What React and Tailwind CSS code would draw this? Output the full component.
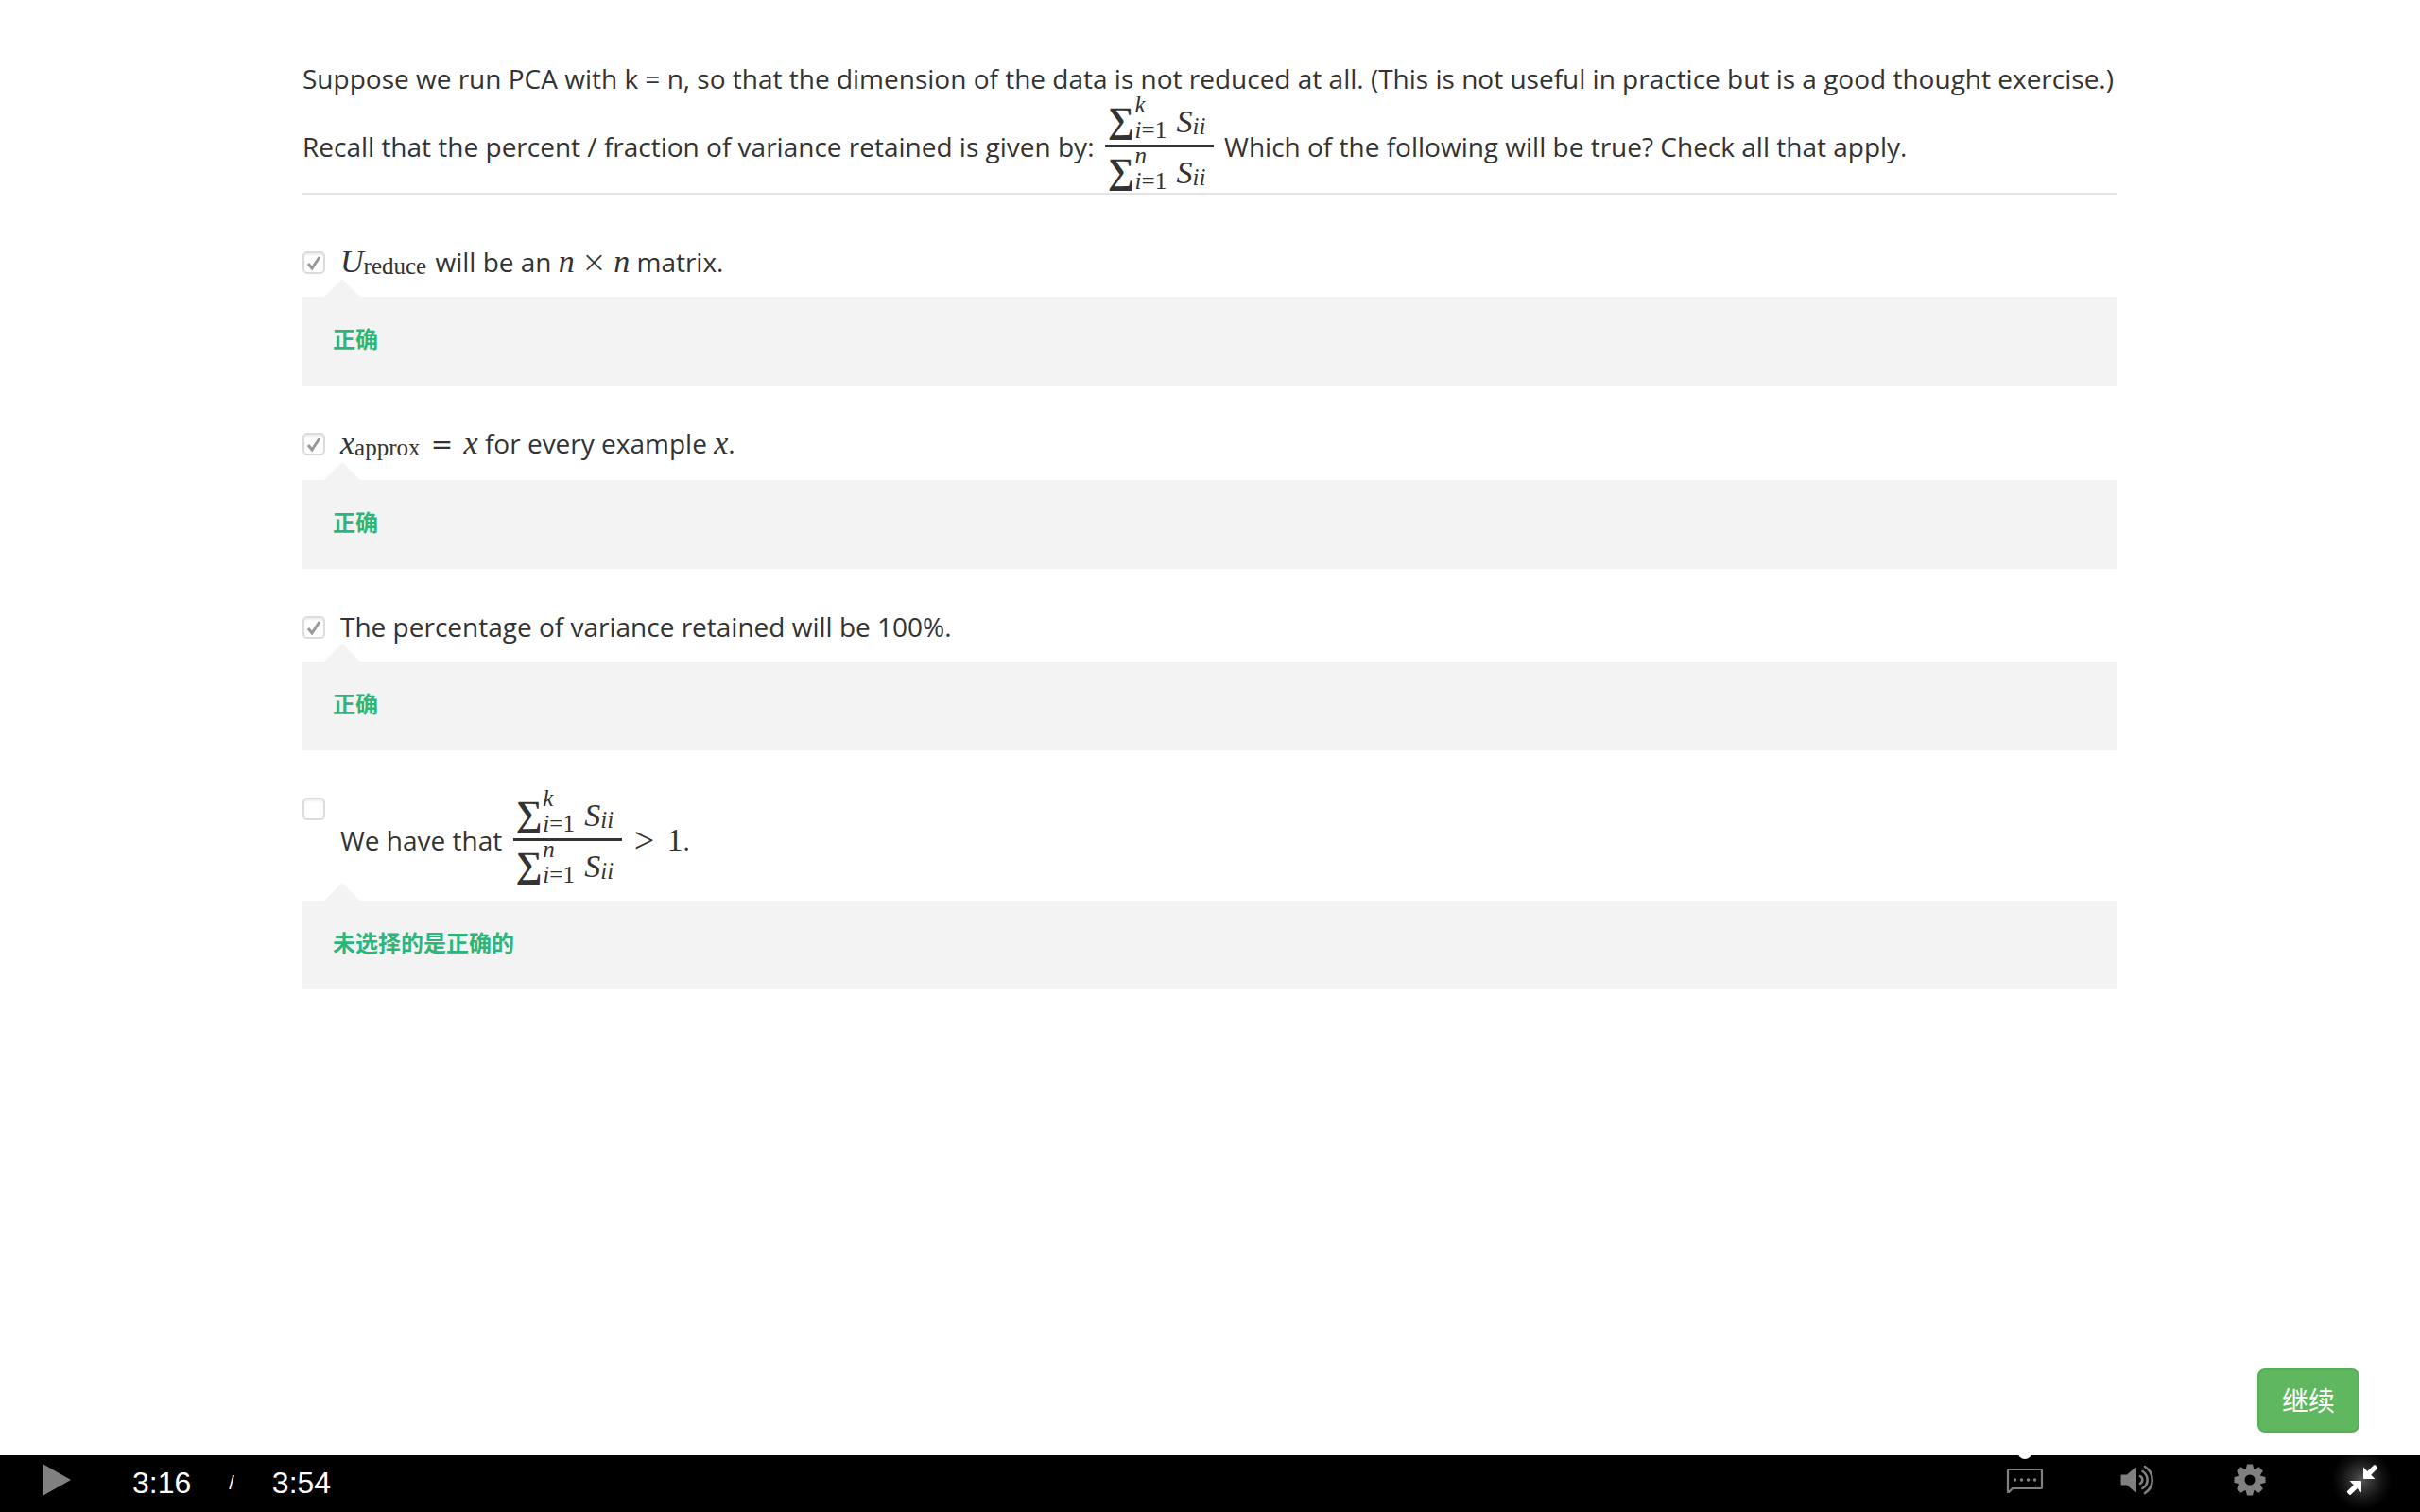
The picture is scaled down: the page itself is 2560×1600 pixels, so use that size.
function Var({ children }) {
  return <i className="font-['Liberation_Serif',serif] text-[34px] leading-none">{children}</i>
}

function Sub({ children }) {
  return (
    <sub className="static align-[-2px] font-['Liberation_Serif',serif] text-[25px] leading-none">{children}</sub>
  )
}

function Sum({ upper }) {
  return (
    <span className="flex h-[51px] items-baseline pl-[3px]">
      <span className="text-[39px] leading-[49px] font-bold">∑</span>
      <span className="-mt-[5px] ml-px flex w-9 flex-col self-start text-[25px] leading-[27px]">
        <i>{upper}</i>
        <span>
          <i>i</i>=1
        </span>
      </span>
      <span className="ml-2 leading-none">
        <Var>S</Var>
        <Sub>
          <i>ii</i>
        </Sub>
      </span>
    </span>
  )
}

function VarianceRatio() {
  return (
    <span className="mx-1 -mb-[6px] inline-flex w-[115px] flex-col align-[26px] font-['Liberation_Serif',serif]">
      <Sum upper="k" />
      <span className="h-[3px] bg-[#333]" />
      <Sum upper="n" />
    </span>
  )
}

function Option({ id, checked, feedback, children }) {
  return (
    <li>
      <div className="flex items-start gap-4 pt-[42px] pb-[18px]">
        <span className="mt-2 grid shrink-0 grid-cols-1">
          <input
            id={id}
            type="checkbox"
            defaultChecked={checked}
            className="peer col-start-1 row-start-1 size-6 appearance-none rounded-[5px] border-2 border-[#dcdcdc] bg-white shadow-[inset_0_2px_2px_#eee]"
          />
          <svg
            viewBox="0 0 24 24"
            className="pointer-events-none invisible col-start-1 row-start-1 size-6 peer-checked:visible"
            fill="none"
            stroke="#999"
            strokeWidth="3"
            aria-hidden="true"
          >
            <path d="M6 13l4 5L18 6" />
          </svg>
        </span>
        <label htmlFor={id} className="min-w-0">
          {children}
        </label>
      </div>
      <div className="relative bg-[#f3f3f3] px-8 py-[35px] text-2xl leading-6 font-bold text-[#2eb67a]">
        <span className="absolute -top-[19px] left-[22px] h-5 w-10 bg-[#f3f3f3] [clip-path:polygon(50%_0,100%_100%,0_100%)]" />
        <p className="-mt-[3px] mb-[3px] font-['Noto_Sans_CJK_SC',sans-serif]">{feedback}</p>
      </div>
    </li>
  )
}

function GearIcon() {
  return (
    <svg width="34" height="34" viewBox="-17 -17 34 34" fill="#808080" aria-hidden="true">
      <mask id="gear-hole">
        <rect x="-17" y="-17" width="34" height="34" fill="#fff" />
        <circle r="5.5" fill="#000" />
      </mask>
      <g mask="url(#gear-hole)">
        <circle r="12" />
        {[0, 45, 90, 135, 180, 225, 270, 315].map((angle) => (
          <path key={angle} d="M-4.5-10.5L-3-16.5H3L4.5-10.5z" transform={`rotate(${angle})`} />
        ))}
      </g>
    </svg>
  )
}

export default function App() {
  return (
    <div className="flex min-h-screen flex-col bg-white text-[#333]">
      <main className="mx-auto w-3/4 grow pt-16 font-['Open_Sans',sans-serif] text-[28px] leading-[38px]">
        <div className="border-b-2 border-[#e3e3e3] pb-[3px]">
          <p>
            Suppose we run PCA with k = n, so that the dimension of the data is not reduced at all. (This is not useful in
            practice but is a good thought exercise.)
          </p>
          <p>
            Recall that the percent / fraction of variance retained is given by: <VarianceRatio /> Which of the following
            will be true? Check all that apply.
          </p>
        </div>
        <ul className="pt-[10px]">
          <Option id="o1" checked feedback="正确">
            <Var>U</Var>
            <Sub>reduce</Sub> <span className="ml-[2px]">will be an</span> <Var>n</Var>{' '}
            <span className="font-['DejaVu_Sans',sans-serif] text-[32px] leading-none font-extralight">×</span> <Var>n</Var>{' '}
            matrix.
          </Option>
          <Option id="o2" checked feedback="正确">
            <span className="inline-block pb-[2px]">
              <Var>x</Var>
              <Sub>approx</Sub> <span className="mx-1 font-['DejaVu_Sans',sans-serif] leading-none">=</span> <Var>x</Var>{' '}
              for every example <Var>x</Var>.
            </span>
          </Option>
          <Option id="o3" checked feedback="正确">
            The percentage of variance retained will be 100%.
          </Option>
          <Option id="o4" feedback="未选择的是正确的">
            We have that <VarianceRatio />{' '}
            <span className="ml-[2px] align-[-2px] font-['Liberation_Serif',serif] text-[38px] leading-none">&gt;</span>{' '}
            <span className="ml-[6px] font-['Liberation_Serif',serif] text-[34px] leading-none">1</span>.
          </Option>
        </ul>
      </main>
      <div className="flex justify-end px-16 pb-6">
        <button
          type="button"
          className="h-[68px] w-[108px] rounded-lg border-2 border-[#56b156] bg-[#5fb760] pb-[2px] font-['Noto_Sans_CJK_SC',sans-serif] text-[28px] leading-none text-white"
        >
          继续
        </button>
      </div>
      <footer className="flex h-[60px] items-center justify-between bg-black pl-[45px] font-['Liberation_Sans',sans-serif] text-[32px] text-white">
        <div className="flex items-center pb-[3px]">
          <button type="button" aria-label="Play">
            <svg width="30" height="34" viewBox="0 0 30 34" fill="#808080" className="mb-[5px]">
              <path d="M0 0l30 17L0 34z" />
            </svg>
          </button>
          <span className="ml-[65px]">3:16</span>
          <span className="mx-10 text-xl">/</span>
          <span>3:54</span>
        </div>
        <div className="flex h-full items-stretch pr-[2px]">
          <button
            type="button"
            aria-label="Subtitles"
            className="relative flex w-[119px] items-center justify-center overflow-hidden pb-[6px]"
          >
            <span className="absolute -top-[11px] left-1/2 size-[15px] -translate-x-1/2 rounded-full bg-white" />
            <svg width="40" height="28" viewBox="0 0 40 28" fill="none" stroke="#808080" strokeWidth="2.2" aria-hidden="true">
              <path d="M2 26V3q0-1 1-1h34q1 0 1 1v18q0 1-1 1H7L3 26z" strokeLinejoin="round" />
              <path d="M9.5 13h.01M16.5 13h.01M23.5 13h.01M30.5 13h.01" strokeWidth="3.5" strokeLinecap="round" />
            </svg>
          </button>
          <button type="button" aria-label="Volume" className="flex w-[119px] items-center justify-center pb-[9px]">
            <svg width="36" height="32" viewBox="0 0 36 32" aria-hidden="true">
              <path d="M1.5 10.5H7L15 3.500q2-1.500 2 .500v24q0 2-2 .500L7 21.500H1.500q-1 0-1-1v-9q0-1 1-1z" fill="#808080" />
              <path
                d="M21 12.200a4.300 4.300 0 0 1 0 7.600M23.500 7a10.500 10.500 0 0 1 0 18M26 2a16.500 16.500 0 0 1 0 28"
                fill="none"
                stroke="#808080"
                strokeWidth="2.6"
                strokeLinecap="round"
              />
            </svg>
          </button>
          <button type="button" aria-label="Settings" className="flex w-[119px] items-center justify-center pb-[9px]">
            <GearIcon />
          </button>
          <button
            type="button"
            aria-label="Exit full screen"
            className="flex w-[119px] items-center justify-center bg-[radial-gradient(circle_at_50%_43%,#555_0,#333_10px,#111_22px,#000_32px)] pb-[9px]"
          >
            <svg width="34" height="34" viewBox="0 0 34 34" fill="#fff" aria-hidden="true">
              <path d="M18 3.500V15q0 1 1 1h11.500l-4.300-4.300 6.500-6.500q1-1 0-2L31 1.500q-1-1-2 0L22.300 8z" />
              <path d="M16 30.500V19q0-1-1-1H3.500l4.300 4.300-6.500 6.500q-1 1 0 2L3 32.500q1 1 2 0L11.700 26z" />
            </svg>
          </button>
        </div>
      </footer>
    </div>
  )
}
